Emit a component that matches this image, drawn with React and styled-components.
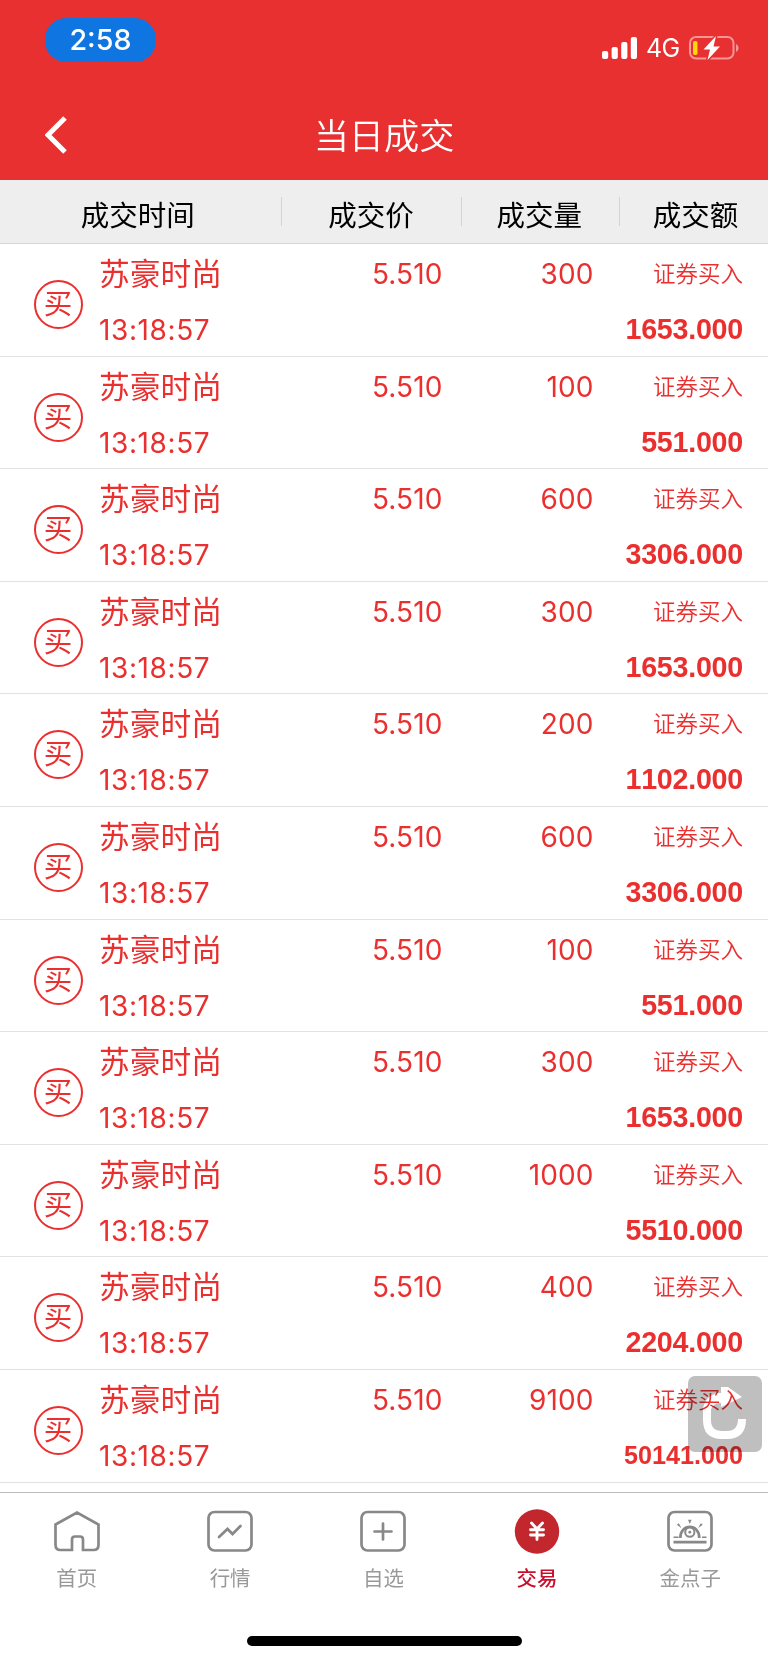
import React from 'react';
import styled, { createGlobalStyle } from 'styled-components';

const GlobalStyle = createGlobalStyle`
  :root {
    --color-red: #e93030;
    --color-trade: #ea2f2f;
    --color-active: #c1272d;
    --color-icon: #888888;
    --font-cjk: "Noto Sans CJK SC", sans-serif;
    --font-ui: Inter, "Noto Sans CJK SC", sans-serif;
    --font-bold: "Liberation Sans", "Noto Sans CJK SC", sans-serif;
  }

  * {
    box-sizing: border-box;
  }

  body {
    margin: 0;
    background: #fff;
    font-family: var(--font-ui);
  }
`;

const Screen = styled.div`
  width: 768px;
  height: 1663px;
  display: flex;
  flex-direction: column;
  overflow: hidden;
  background: #fff;
`;

const TopBar = styled.header`
  height: 180.4px;
  flex: none;
  background: var(--color-red);
  color: #fff;
`;

const StatusBar = styled.div`
  height: 91px;
  padding: 18px 29px 0 45px;
  display: flex;
  align-items: flex-start;
  justify-content: space-between;
`;

const Clock = styled.div`
  width: 111px;
  height: 43.5px;
  border-radius: 21px;
  background: #0f75e0;
  font-size: 28.67px;
  font-weight: 500;
  line-height: 44px;
  text-align: center;
`;

const Signals = styled.div`
  display: flex;
  align-items: center;
  height: 24px;
  margin-top: 17.5px;
`;

const Network = styled.span`
  width: 34px;
  margin: 0 9px 0 8px;
  font-size: 25px;
  line-height: 24px;
  letter-spacing: -0.6px;
  white-space: nowrap;
`;

const TitleBar = styled.div`
  height: 88px;
  padding: 0 45px;
  display: grid;
  grid-template-columns: 60px 1fr 60px;
  align-items: center;
`;

const BackButton = styled.button`
  display: flex;
  padding: 0;
  border: 0;
  background: none;
`;

const Title = styled.h1`
  margin: -2px 0 0;
  font-family: var(--font-cjk);
  font-size: 35.2px;
  font-weight: 350;
  line-height: 52px;
  text-align: center;
`;

const TableHead = styled.div`
  height: 63.6px;
  flex: none;
  display: grid;
  grid-template-columns: 281.5px 180px 158.5px 148px;
  align-items: center;
  background: #eee;
  border-bottom: 1.5px solid #d6d6d6;
`;

const HeadCell = styled.div`
  height: 29px;
  padding: ${({ $shift = 0 }) => ($shift < 0 ? `0 ${-$shift}px 0 0` : `0 0 0 ${$shift}px`)};
  border-right: ${({ $last }) => ($last ? '0' : '1px solid #d4d4d4')};
  font-family: var(--font-cjk);
  font-size: 28.5px;
  line-height: 33px;
  color: #000;
  text-align: center;
  white-space: nowrap;
`;

const List = styled.main`
  flex: none;
  height: 1248.4px;
`;

const Row = styled.div`
  height: 112.6px;
  padding: 0 25px 0 34px;
  display: grid;
  grid-template-columns: 65px 170px 173.5px 151px 1fr;
  border-bottom: 1px solid #e2e2e2;
  color: var(--color-trade);
`;

const Badge = styled.div`
  align-self: center;
  width: 49px;
  height: 49px;
  margin: 8px 0 0 -0.5px;
  border: 2px solid var(--color-trade);
  border-radius: 50%;
  font-family: var(--font-cjk);
  font-size: 28.5px;
  line-height: 40px;
  text-align: center;
`;

const Cell = styled.div`
  display: flex;
  flex-direction: column;
  align-items: ${({ $left }) => ($left ? 'flex-start' : 'flex-end')};
  white-space: nowrap;
`;

const Name = styled.div`
  height: 60px;
  font-family: var(--font-cjk);
  font-size: 30.72px;
  line-height: 56px;
`;

const Time = styled.div`
  font-size: 28px;
  line-height: 53px;
  letter-spacing: 0.6px;
`;

const Figure = styled.div`
  font-size: 28px;
  line-height: 60px;
  letter-spacing: 0.1px;
`;

const Kind = styled.div`
  height: 58px;
  font-family: var(--font-cjk);
  font-size: 22.5px;
  font-weight: 350;
  line-height: 57px;
`;

const Amount = styled.div`
  font-family: var(--font-bold);
  font-size: ${({ $long }) => ($long ? 25.2 : 28.67)}px;
  font-weight: 700;
  font-kerning: none;
  line-height: 55px;
  letter-spacing: ${({ $long }) => ($long ? 0 : '-0.25px')};
`;

const TabBar = styled.nav`
  position: relative;
  flex: 1;
  padding: 15px 1px 0 0;
  display: grid;
  grid-template-columns: repeat(5, 1fr);
  align-content: start;
  border-top: 1px solid #bdbdbd;
  background: #fff;
`;

const Tab = styled.div`
  display: flex;
  flex-direction: column;
  align-items: center;
  font-family: var(--font-cjk);
  font-size: 20.48px;
  line-height: 30px;
  font-weight: ${({ $active }) => ($active ? 500 : 400)};
  color: ${({ $active }) => ($active ? '#c8102e' : '#999')};

  svg {
    display: block;
    margin-bottom: 7px;
  }
`;

const HomeIndicator = styled.div`
  position: absolute;
  left: 247px;
  bottom: 17px;
  width: 275px;
  height: 10px;
  border-radius: 5px;
  background: #000;
`;

/* multiply keeps the row text visible through the button */
const FloatingButton = styled.button`
  position: absolute;
  left: 688px;
  top: 1376px;
  width: 74px;
  height: 76px;
  padding: 0;
  border: 0;
  border-radius: 7px;
  background: #bfbfbf;
  mix-blend-mode: multiply;
`;

const SignalIcon = () => (
  <svg width="36" height="22" viewBox="0 0 36 22" fill="#fff">
    <rect x="0" y="14" width="6.2" height="8" rx="2" />
    <rect x="9.6" y="10" width="6.2" height="12" rx="2" />
    <rect x="19.2" y="5" width="6.2" height="17" rx="2" />
    <rect x="28.8" y="0" width="6.2" height="22" rx="2" />
  </svg>
);

const BatteryIcon = () => (
  <svg width="50" height="24" viewBox="0 0 50 24">
    <rect x="1" y="1" width="43.5" height="21.5" rx="6" fill="none" stroke="#f49797" strokeWidth="2" />
    <path d="M47 8c3.4 1.5 3.4 6.5 0 8z" fill="#f49797" />
    <rect x="4" y="5" width="4.5" height="14" rx="1.8" fill="#ffd60a" />
    <path
      d="M27 0 14.5 13.5H21L18.5 24 31 10.5h-6.5z"
      fill="#fff"
      stroke="#e93030"
      strokeWidth="3"
      paintOrder="stroke"
    />
  </svg>
);

const ReloadIcon = () => (
  <svg width="74" height="76" viewBox="0 0 74 76">
    <path
      d="M33 11h7l14 10-21 10v-4c-6 0-10 3-10 8v9q0 11 11 11h5q11 0 11-12h8q0 20-19 20h-5q-19 0-19-19V35c0-10 7-18 18-18z"
      fill="#fff"
    />
  </svg>
);

const icons = {
  home: (
    <path d="M2.5 16.5 24 4.5l21.5 12V37q0 5-5 5H30V31.5q0-3-3-3h-5q-3 0-3 3V42H7.5q-5 0-5-5z" />
  ),
  quotes: (
    <>
      <rect x="2.5" y="4" width="43" height="38.5" rx="6" />
      <path d="m13 29 8.500-8 5 5 8-8" strokeLinecap="round" />
    </>
  ),
  watch: (
    <>
      <rect x="2.5" y="4" width="43" height="38.5" rx="6" />
      <path d="M24 15.5v16M15.5 23.5h17" strokeLinecap="round" />
    </>
  ),
  trade: (
    <>
      <circle cx="24" cy="23.5" r="22.2" fill="#c1272d" stroke="none" />
      <path
        d="m18.5 15 5.5 6 5.5-6M17.5 21.8h13M17.5 27h13M24 21v10.5"
        stroke="#fff"
        strokeWidth="2.9"
        strokeLinecap="round"
      />
    </>
  ),
  ideas: (
    <>
      <rect x="2.5" y="4" width="43" height="38.5" rx="6" />
      <path d="M7.5 34.2h33" />
      <path d="M7.5 29.3h5M36 29.3h4.5" strokeWidth="1.6" />
      <path d="M14.3 30c0-15 19-15 19 0" />
      <circle cx="23.8" cy="24.2" r="4.6" strokeWidth="2" />
      <circle cx="23.8" cy="24.2" r="1.4" fill="#888" stroke="none" />
      <path
        d="M22 11.8h3.6l-1.8 4.2zM10.8 16.8l2-1.6 2.6 4.8zM36.8 16.8l-2-1.6-2.6 4.8z"
        fill="#888"
        stroke="none"
      />
    </>
  ),
};

const TabIcon = ({ name }) => (
  <svg width="48" height="47" viewBox="0 0 48 47" fill="none" stroke="#888" strokeWidth="2.7">
    {icons[name]}
  </svg>
);

const trades = [
  { volume: '300', amount: '1653.000' },
  { volume: '100', amount: '551.000' },
  { volume: '600', amount: '3306.000' },
  { volume: '300', amount: '1653.000' },
  { volume: '200', amount: '1102.000' },
  { volume: '600', amount: '3306.000' },
  { volume: '100', amount: '551.000' },
  { volume: '300', amount: '1653.000' },
  { volume: '1000', amount: '5510.000' },
  { volume: '400', amount: '2204.000' },
  { volume: '9100', amount: '50141.000' },
];

const tabs = [
  { icon: 'home', label: '首页' },
  { icon: 'quotes', label: '行情' },
  { icon: 'watch', label: '自选' },
  { icon: 'trade', label: '交易', active: true },
  { icon: 'ideas', label: '金点子' },
];

const App = () => (
  <Screen>
    <GlobalStyle />
    <TopBar>
      <StatusBar>
        <Clock>2:58</Clock>
        <Signals>
          <SignalIcon />
          <Network>4G</Network>
          <BatteryIcon />
        </Signals>
      </StatusBar>
      <TitleBar>
        <BackButton aria-label="返回">
          <svg width="23" height="38" viewBox="0 0 23 38" fill="none" stroke="#fff" strokeWidth="5">
            <path d="M20 2 3 19l17 17" />
          </svg>
        </BackButton>
        <Title>当日成交</Title>
      </TitleBar>
    </TopBar>
    <TableHead>
      <HeadCell $shift={-5}>成交时间</HeadCell>
      <HeadCell>成交价</HeadCell>
      <HeadCell $shift={-2}>成交量</HeadCell>
      <HeadCell $last $shift={3}>成交额</HeadCell>
    </TableHead>
    <List>
      {trades.map(({ volume, amount }, i) => (
        <Row key={i}>
          <Badge>买</Badge>
          <Cell $left>
            <Name>苏豪时尚</Name>
            <Time>13:18:57</Time>
          </Cell>
          <Cell>
            <Figure>5.510</Figure>
          </Cell>
          <Cell>
            <Figure>{volume}</Figure>
          </Cell>
          <Cell>
            <Kind>证券买入</Kind>
            <Amount $long={amount.length > 8}>{amount}</Amount>
          </Cell>
        </Row>
      ))}
    </List>
    <TabBar>
      {tabs.map(({ icon, label, active }) => (
        <Tab key={icon} $active={active}>
          <TabIcon name={icon} />
          {label}
        </Tab>
      ))}
      <HomeIndicator />
    </TabBar>
    <FloatingButton aria-label="刷新">
      <ReloadIcon />
    </FloatingButton>
  </Screen>
);

export default App;
